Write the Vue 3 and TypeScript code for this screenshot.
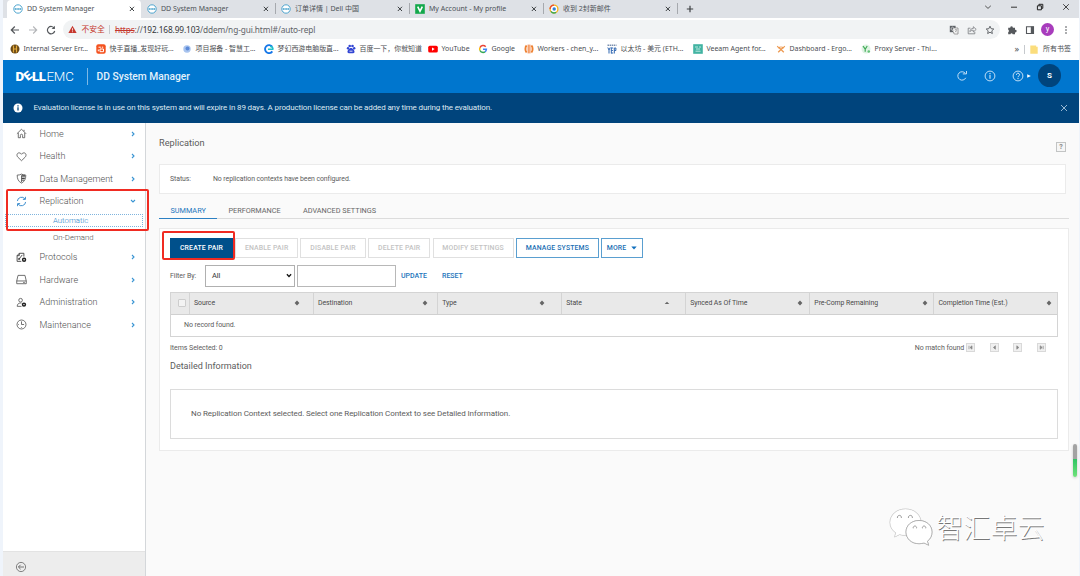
<script setup lang="ts">
interface Tab { title: string; icon: 'dell' | 'v' | 'mail'; active?: boolean }
interface Bookmark { label: string; icon: string; width: number }
interface NavItem { label: string; icon: string; open?: boolean; children?: string[] }

const tabs: Tab[] = [
  { title: 'DD System Manager', icon: 'dell', active: true },
  { title: 'DD System Manager', icon: 'dell' },
  { title: '订单详情 | Dell 中国', icon: 'dell' },
  { title: 'My Account - My profile', icon: 'v' },
  { title: '收到 2封新邮件', icon: 'mail' },
]

const bookmarks: Bookmark[] = [
  { label: 'Internal Server Err...', icon: 'hive', width: 86 },
  { label: '快手直播_发现好玩...', icon: 'ks', width: 86 },
  { label: '项目报备 - 智慧工...', icon: 'globe', width: 82 },
  { label: '梦幻西游电脑版直...', icon: 'cc', width: 82 },
  { label: '百度一下，你就知道', icon: 'paw', width: 82 },
  { label: 'YouTube', icon: 'yt', width: 50 },
  { label: 'Google', icon: 'google', width: 46 },
  { label: 'Workers - chen_y...', icon: 'workers', width: 83 },
  { label: '以太坊 - 美元 (ETH...', icon: 'yep', width: 86 },
  { label: 'Veeam Agent for...', icon: 'veeam', width: 83 },
  { label: 'Dashboard - Ergo...', icon: 'dash', width: 85 },
  { label: 'Proxy Server - Thi...', icon: 'proxy', width: 90 },
]

const nav: NavItem[] = [
  { label: 'Home', icon: 'home' },
  { label: 'Health', icon: 'heart' },
  { label: 'Data Management', icon: 'shield' },
  { label: 'Replication', icon: 'sync', open: true, children: ['Automatic', 'On-Demand'] },
  { label: 'Protocols', icon: 'proto' },
  { label: 'Hardware', icon: 'disk' },
  { label: 'Administration', icon: 'admin' },
  { label: 'Maintenance', icon: 'clock' },
]

const columns = [
  { label: 'Source', sort: 'both', pad: 13 },
  { label: 'Destination', sort: 'both', pad: 9 },
  { label: 'Type', sort: 'both', pad: 16 },
  { label: 'State', sort: 'up', pad: 15 },
  { label: 'Synced As Of Time', sort: 'both', pad: 6 },
  { label: 'Pre-Comp Remaining', sort: 'both', pad: 5 },
  { label: 'Completion Time (Est.)', sort: 'both', pad: 4.5 },
]

const actions = [
  { label: 'CREATE PAIR', kind: 'primary', width: 63 },
  { label: 'ENABLE PAIR', kind: 'off', width: 62.5 },
  { label: 'DISABLE PAIR', kind: 'off', width: 65.5 },
  { label: 'DELETE PAIR', kind: 'off', width: 62 },
  { label: 'MODIFY SETTINGS', kind: 'off', width: 81 },
  { label: 'MANAGE SYSTEMS', kind: 'line', width: 83 },
  { label: 'MORE', kind: 'line', width: 41.5 },
]

const pagers = [
  'M3 2.8v3.4M6 2.8L4 4.5l2 1.7z',
  'M5.4 2.8L3.4 4.5l2 1.7z',
  'M3.8 2.8l2 1.7-2 1.7z',
  'M6.2 2.8v3.4M3.2 2.8l2 1.7-2 1.7z',
]
</script>

<template>
  <div class="window">
    <div class="tabbar">
      <div v-for="(t, i) in tabs" :key="i" class="tab" :class="{ active: t.active, sep: i > 1 }">
        <svg v-if="t.icon === 'dell'" class="fav" viewBox="0 0 10 10"><circle cx="5" cy="5" r="4.2" fill="#fff" stroke="#3c9cc9" stroke-width=".9" /><path d="M1.8 5h6.4" stroke="#3c9cc9" stroke-width="1.7" stroke-dasharray="1.3 .35" /></svg>
        <svg v-else-if="t.icon === 'v'" class="fav" viewBox="0 0 10 10"><rect x=".2" y=".2" width="9.6" height="9.6" fill="#12a84b" /><path d="M2.7 2.6L5 7.3l2.3-4.7" fill="none" stroke="#fff" stroke-width="1.6" /></svg>
        <svg v-else class="fav" viewBox="0 0 10 10"><circle cx="5" cy="5" r="3.9" fill="#fff" stroke="#f5b41e" stroke-width="1.4" /><path d="M1.1 5A3.9 3.9 0 0 1 5 1.1" fill="none" stroke="#ea4a35" stroke-width="1.4" /><path d="M2 7.4A3.9 3.9 0 0 0 7 8.300" fill="none" stroke="#37a853" stroke-width="1.4" /><circle cx="5.2" cy="5" r="1.7" fill="#2f7fd8" /></svg>
        <span class="tab-title">{{ t.title }}</span>
        <svg class="tab-x" viewBox="0 0 6 6"><path d="M.8 .8l4.2 4.2M5 .8L.8 5" stroke="#3c4043" stroke-width="1" /></svg>
      </div>
      <div class="newtab"><svg viewBox="0 0 8 8"><path d="M4 .8v6.4M.8 4h6.4" stroke="#3c4043" stroke-width="1.2" /></svg></div>
      <div class="winctl">
        <svg viewBox="0 0 10 10"><path d="M2.2 3.8L5 6.4l2.8-2.6" fill="none" stroke="#444" stroke-width=".9" /></svg>
        <svg viewBox="0 0 10 10"><path d="M2 5.2h6" stroke="#333" /></svg>
        <svg viewBox="0 0 10 10"><path d="M2.4 3.8h4v4h-4zM3.9 3.6V2.3h3.9v4H6.6" fill="none" stroke="#222" stroke-width="1" /></svg>
        <svg viewBox="0 0 10 10"><path d="M2.2 2.2l5.6 5.6M7.8 2.2L2.2 7.8" stroke="#333" stroke-width=".9" /></svg>
      </div>
    </div>

    <div class="toolbar">
      <svg class="tool t1" viewBox="0 0 10 10"><path d="M9 5H1.4M4.8 1.5L1.3 5l3.5 3.5" fill="none" stroke="#55585c" stroke-width="1.2" /></svg>
      <svg class="tool t2" viewBox="0 0 10 10"><path d="M1 5h7.6M5.2 1.5L8.7 5 5.2 8.500" fill="none" stroke="#b4b6b9" stroke-width="1.1" /></svg>
      <svg class="tool t3" viewBox="0 0 10 10"><path d="M8.300 3.300A3.700 3.700 0 1 0 8.700 6" fill="none" stroke="#55585c" stroke-width="1.200" /><path d="M8.900 .8v3.300H5.600z" fill="#55585c" /></svg>
      <div class="address">
        <svg class="warn" viewBox="0 0 10 10"><path d="M5 .8L9.600 9H.4z" fill="#c5362c" /><path d="M5 3.600v2.600M5 7v1" stroke="#fff" stroke-width=".9" /></svg>
        <span class="unsafe">不安全</span>
        <i class="bar"></i>
        <span class="url"><s>https</s><span class="grey">://</span><b>192.168.99.103</b><span class="grey">/ddem/ng-gui.html#/auto-repl</span></span>
        <span class="addr-icons">
          <svg viewBox="0 0 10 10"><rect x=".8" y=".8" width="5.800" height="6.400" fill="#5f6368" /><path d="M4.500 3h4.500v6H5.200L4.300 7" fill="#fff" stroke="#777" stroke-width=".7" /><path d="M5.600 4.700h2.600M6.900 4v.7M5.800 7.600l2-2.600M6 5.500l2 2" stroke="#777" stroke-width=".5" /><path d="M4.800 3A1.500 1.500 0 1 0 5 4.200H3.700" fill="none" stroke="#fff" stroke-width=".6" /></svg>
          <svg viewBox="0 0 10 10"><path d="M3.500 3.200H1.200v5.600h6.600V6.800M2.800 6.800c.2-2.300 1.600-3.300 3.500-3.300V1.700L9.200 4.400 6.300 7V5.300c-1.500 0-2.600.4-3.500 1.500z" fill="none" stroke="#777a7e" stroke-width=".8" /></svg>
          <svg viewBox="0 0 10 10"><path d="M5 1.200l1.150 2.500 2.650.3-2 1.850.55 2.700L5 7.200 2.650 8.550l.55-2.700-2-1.850 2.650-.3z" fill="none" stroke="#55585c" stroke-width=".9" /></svg>
        </span>
      </div>
      <svg class="tool ext" viewBox="0 0 10 10"><path d="M1.200 2.800h2.100a1.300 1.300 0 1 1 2.500 0h2.200v2.100a1.250 1.250 0 1 1 0 2.400V9.200H5.700a1.200 1.200 0 0 0-2.300 0H1.200V7a1.200 1.200 0 0 0 0-2.200z" fill="#55585c" /></svg>
      <svg class="tool side" viewBox="0 0 10 10"><path d="M1.500 1.700h7v6.800h-7z" fill="none" stroke="#55585c" stroke-width="1.100" /><path d="M5.800 1.500h3v7.200h-3z" fill="#55585c" /></svg>
      <span class="profile">y</span>
      <svg class="tool dots" viewBox="0 0 10 10"><path d="M5 1.300v1.400M5 4.300v1.400M5 7.300v1.400" stroke="#55585c" stroke-width="1.300" /></svg>
    </div>

    <div class="bookmarks">
      <div v-for="b in bookmarks" :key="b.label" class="bm" :style="{ width: b.width + 'px' }">
        <svg class="bmi" viewBox="0 0 10 10">
          <template v-if="b.icon === 'hive'"><circle cx="5" cy="5" r="4.500" fill="#6b4a16" /><path d="M3.500 1.500v7M6.500 1.500v7M3.500 5h3" stroke="#e2a83a" stroke-width="1.200" /></template>
          <template v-else-if="b.icon === 'ks'"><rect x=".3" y=".3" width="9.400" height="9.400" rx="2" fill="#f4511e" /><path d="M2.500 3.200h2.400M5.800 3.200h1.400M4 5h3.500v2.700H4zM2.300 5.500v1.800" fill="none" stroke="#fff" stroke-width="1" /></template>
          <template v-else-if="b.icon === 'globe'"><circle cx="5" cy="5" r="3.700" fill="#a9c4ee" /><circle cx="5.500" cy="4.500" r="2" fill="#5c8ad9" /></template>
          <template v-else-if="b.icon === 'cc'"><path d="M8.300 2.800A4 4 0 1 0 8.300 7.400" fill="none" stroke="#1677e8" stroke-width="1.900" /><path d="M4 5.300h5.500M6 2.500A2.700 2.700 0 0 1 9 5" fill="none" stroke="#1fc0c8" stroke-width="1.500" /></template>
          <template v-else-if="b.icon === 'paw'"><circle cx="2" cy="4.200" r="1.200" fill="#3346d3" /><circle cx="3.700" cy="2" r="1.300" fill="#3346d3" /><circle cx="6.500" cy="2" r="1.300" fill="#3346d3" /><circle cx="8.200" cy="4.300" r="1.200" fill="#3346d3" /><path d="M5 4c1.700 0 3.700 2.300 3.500 4-.2 1.500-2 1.400-3.500 1.200C3.500 9.400 1.700 9.500 1.500 8 1.300 6.300 3.300 4 5 4z" fill="#3346d3" /><path d="M3.500 7.200h3" stroke="#fff" stroke-width=".8" /></template>
          <template v-else-if="b.icon === 'yt'"><rect x=".2" y="1.700" width="9.600" height="6.800" rx="1.600" fill="#f00" /><path d="M4 3.500v3.200L6.700 5.100z" fill="#fff" /></template>
          <template v-else-if="b.icon === 'google'"><g fill="none" stroke-width="1.500"><path d="M7.700 2.700A3.400 3.400 0 0 0 2 3.600" stroke="#ea4335" /><path d="M2 3.600a3.400 3.400 0 0 0 0 2.900" stroke="#fbbc05" /><path d="M2 6.500a3.400 3.400 0 0 0 5 1.300" stroke="#34a853" /><path d="M7 7.800A3.400 3.400 0 0 0 8.400 5.200H5" stroke="#4285f4" /></g></template>
          <template v-else-if="b.icon === 'workers'"><path d="M2.600 1.500C1 3 1 7 2.600 8.500M7.400 1.500C9 3 9 7 7.400 8.500" fill="none" stroke="#ee8131" stroke-width="1.900" /><path d="M4.200 .6v8.800M5.900 .6v8.800" stroke="#f0742a" stroke-width="1" /></template>
          <template v-else-if="b.icon === 'yep'"><path d="M.5 1.300h9" stroke="#7a8fae" stroke-width="1.600" stroke-dasharray="1.500 .6" /><path d="M.8 3.500L2 6l1.200-2.500M2 6v3.500M4.300 3.500v6M4.300 4h1.900M4.300 6.500h1.600M4.300 9h1.900M7.300 9.500V4h1.600v2.500H7.300" fill="none" stroke="#2f66b1" stroke-width="1" /></template>
          <template v-else-if="b.icon === 'veeam'"><rect x=".2" y=".2" width="9.600" height="9.600" fill="#42b3a2" /><path d="M2 3h3M6 3h2M3 5h4M2.500 7.200h5" stroke="#c9efe8" stroke-width=".9" /></template>
          <template v-else-if="b.icon === 'dash'"><path d="M2.200 8.300L6.800 3.700M7.800 8.300L3.200 3.700" fill="none" stroke="#ee9a52" stroke-width="1.300" /><path d="M1.200 2.200l1.900 1.900 1.400-1.400M8.800 2.200L6.900 4.100 5.500 2.700" fill="none" stroke="#ee9a52" stroke-width="1.200" /></template>
          <template v-else><circle cx="5" cy="5" r="4.500" fill="#dff3e3" /><path d="M2 2l2.200 3.200L6.200 2M4.200 5.200v2.500" fill="none" stroke="#3fab56" stroke-width="1.200" /><circle cx="7.800" cy="7.500" r="1.300" fill="#65c178" /></template>
        </svg>
        <span class="bmt">{{ b.label }}</span>
      </div>
      <span class="more-bm">»</span>
      <i class="bar"></i>
      <svg class="folder" viewBox="0 0 8 9"><path d="M.3 .5h5.900v1.200h1.500v7H.3z" fill="#fbdd7c" /></svg>
      <span class="bmt">所有书签</span>
    </div>

    <header class="app-header">
      <div class="logo"><span class="l-d">D</span><span class="l-e">E</span><span class="l-l">LL</span><span class="l-emc">EMC</span></div>
      <div class="product">DD System Manager</div>
      <div class="head-icons">
        <svg viewBox="0 0 12 12"><path d="M9.300 3.300A4.200 4.200 0 1 0 9.800 7.800M6.800 3.900h3.700V1" fill="none" stroke="#d5e9f9" stroke-width=".9" /></svg>
        <svg viewBox="0 0 12 12"><circle cx="6" cy="6" r="4.900" fill="none" stroke="#d5e9f9" stroke-width=".9" /><path d="M6 5v3.800M6 3.100v1.100" stroke="#d5e9f9" stroke-width="1.100" /></svg>
        <svg viewBox="0 0 12 12"><circle cx="6" cy="6" r="4.900" fill="none" stroke="#d5e9f9" stroke-width=".9" /><path d="M4.400 4.800c0-2.200 3.300-2.100 3.200 0C7.500 5.900 6 5.900 6 7.200M6 8v1.100" fill="none" stroke="#d5e9f9" stroke-width="1" /></svg>
        <svg class="caret" viewBox="0 0 4 4"><path d="M.2 .2v3.600L3.900 2z" fill="#fff" /></svg>
        <span class="avatar">S</span>
      </div>
    </header>

    <div class="banner">
      <svg class="info" viewBox="0 0 10 10"><circle cx="5" cy="5" r="4.500" fill="#fff" /><path d="M5 4.300v3.300M5 2.300v1.200" stroke="#00447c" stroke-width="1.300" /></svg>
      <span>Evaluation license is in use on this system and will expire in 89 days. A production license can be added any time during the evaluation.</span>
      <svg class="close" viewBox="0 0 8 8"><path d="M1 1l6 6M7 1L1 7" stroke="#a9c5dc" stroke-width=".9" /></svg>
    </div>

    <div class="body">
      <nav class="side-nav">
        <template v-for="n in nav" :key="n.label">
          <div class="nav-row">
            <svg class="ni" viewBox="0 0 12 12" fill="none" stroke="#555" stroke-width=".9">
              <path v-if="n.icon === 'home'" d="M1 6.300L6 1.300l5 5M2.500 5.300v5.300h2.300V8a1.200 1.200 0 0 1 2.400 0v2.600h2.300V5.300M8.800 3.700V2" />
              <path v-else-if="n.icon === 'heart'" d="M6 10.600L2 6.700C.2 4.700 1.200 2 3.400 2 4.600 2 5.500 2.700 6 3.600 6.500 2.700 7.400 2 8.600 2c2.200 0 3.200 2.700 1.400 4.700z" />
              <template v-else-if="n.icon === 'shield'"><path d="M1.300 2.300C3 2.300 4.500 2 6 1.200c1.500.8 3 1.100 4.700 1.100 0 4-1.200 7-4.700 8.700C2.500 9.300 1.300 6.300 1.300 2.300z" /><path d="M6 4.200h4M6 6h3.600M6 7.800h2.700M6.300 2.500h3.500" stroke="#333" stroke-width="1" /><path d="M6 2.500v7.500" /></template>
              <path v-else-if="n.icon === 'sync'" d="M1.500 5.500A4.600 4.600 0 0 1 9.700 3.100M10.500 6.500a4.600 4.600 0 0 1-8.200 2.400M10.300 .9v2.800H7.500M1.700 11.100V8.300h2.800" stroke="#2f86cb" stroke-width="1" />
              <template v-else-if="n.icon === 'proto'"><path d="M5.800 10.200H1.200V4L3.600 1.400h5V5M1.200 4h2.400V1.400M6.800 3.200L3.500 7.500" stroke="#333" /><circle cx="3.400" cy="7.600" r=".8" stroke="#333" /><circle cx="8.800" cy="8.500" r="1.600" stroke="#222" stroke-width="1.600" /></template>
              <path v-else-if="n.icon === 'disk'" d="M.8 7.600L2.200 1.500h7.600l1.400 6.100v3H.8zM.8 7.600h10.400M7.800 9.200h1.800" />
              <template v-else-if="n.icon === 'admin'"><circle cx="5" cy="3.500" r="2" /><path d="M6 10.200H1.300C1.300 7.600 3 6.600 5 6.600h1" /><circle cx="8.700" cy="8.300" r="1.600" stroke="#222" stroke-width="1.600" /></template>
              <template v-else><circle cx="6" cy="6" r="4.900" /><path d="M6 2.600V6h2.800M2.200 6h.8M6 9v.8" /></template>
            </svg>
            <span class="nl">{{ n.label }}</span>
            <svg class="chev" viewBox="0 0 6 6"><path :d="n.open ? 'M1 2l2 2 2-2' : 'M2 1l2 2-2 2'" fill="none" stroke="#3a95d3" stroke-width="1.100" /></svg>
          </div>
          <div v-if="n.children" class="sub">
            <div v-for="(c, i) in n.children" :key="c" class="sub-item" :class="{ sel: i === 0 }">{{ c }}</div>
          </div>
        </template>
        <div class="nav-foot">
          <svg viewBox="0 0 12 12"><circle cx="6" cy="6" r="4.600" fill="none" stroke="#666" stroke-width=".8" /><path d="M9 6H3.500M5.600 3.800L3.400 6l2.200 2.200" fill="none" stroke="#666" stroke-width=".9" /></svg>
        </div>
      </nav>

      <main class="main">
        <div class="title-row"><h1>Replication</h1><span class="help">?</span></div>
        <section class="status"><span class="st-label">Status:</span><span>No replication contexts have been configured.</span></section>
        <div class="subtabs">
          <span class="stab on">SUMMARY</span><span class="stab perf">PERFORMANCE</span><span class="stab adv">ADVANCED SETTINGS</span>
        </div>
        <section class="panel">
          <div class="actions">
            <button v-for="a in actions" :key="a.label" class="btn" :class="a.kind" :style="{ width: a.width + 'px' }">
              {{ a.label }}<svg v-if="a.label === 'MORE'" viewBox="0 0 6 4"><path d="M.3 .5h5.400L3 3.600z" fill="#0f6fbd" /></svg>
            </button>
          </div>
          <div class="filter">
            <span class="fl">Filter By:</span>
            <span class="select">All<svg viewBox="0 0 6 5"><path d="M.9 1.300L3 3.500l2.100-2.200" fill="none" stroke="#111" stroke-width="1.300" /></svg></span>
            <span class="input"></span>
            <a class="up">UPDATE</a><a>RESET</a>
          </div>
          <div class="grid">
            <div class="thead">
              <div class="th chk"><i></i></div>
              <div v-for="c in columns" :key="c.label" class="th" :style="{ paddingRight: c.pad + 'px' }">
                <span>{{ c.label }}</span>
                <svg viewBox="0 0 6 6"><path :d="c.sort === 'both' ? 'M3 .4L5.400 3 3 5.600.6 3z' : 'M3 1.700L5.300 4H.7z'" fill="#666" /></svg>
              </div>
            </div>
            <div class="empty">No record found.</div>
          </div>
          <div class="foot">
            <span>Items Selected: 0</span>
            <span class="nomatch">No match found</span>
            <svg v-for="p in pagers" :key="p" class="pg" viewBox="0 0 9 9"><rect x=".5" y=".5" width="8" height="8" fill="#f0f0f0" stroke="#d9d9d9" /><path :d="p" fill="#888" stroke="#888" stroke-width=".7" /></svg>
          </div>
          <h2>Detailed Information</h2>
          <div class="detail">No Replication Context selected. Select one Replication Context to see Detailed Information.</div>
        </section>
      </main>
    </div>

    <div class="mark mark-nav"></div>
    <div class="mark mark-create"></div>
    <div class="meter"></div>
    <div class="watermark">
      <svg viewBox="0 0 46 40">
        <g fill="#fff" stroke-linejoin="round">
          <path class="bubble" d="M17.500 2C8.500 2 2 8 2 15.500c0 4.500 2.300 8 5.800 10.300L6.600 30l5-2.500c2 .6 4 .9 6 .9C26.500 28.400 33 23 33 15.500S26.500 2 17.500 2z" stroke="#d8d8d8" stroke-width=".4" />
          <path class="bubble" d="M31 13.500c-7.500 0-13 5-13 11.500s5.500 11.700 13 11.700c1.800 0 3.500-.3 5-.8l4.600 2.300-1.200-4c3-2.200 4.600-5.400 4.600-9.200 0-6.500-5.500-11.500-13-11.500z" stroke="#a5a5a5" stroke-width=".6" />
        </g>
        <g fill="none" stroke="#999" stroke-width="1"><path d="M9.500 11a2 2 0 1 1 3.800 0M20.500 11a2 2 0 1 1 3.800 0M25.300 21.300a1.700 1.700 0 1 1 3.200 0M34.500 21.300a1.700 1.700 0 1 1 3.200 0" /></g>
      </svg>
      <span>智汇卓云</span>
    </div>
  </div>
</template>

<style>
html, body { margin: 0; overflow: hidden; }
</style>

<style scoped>
* { box-sizing: border-box; }
svg { display: block; flex: none; }
.window { position: relative; width: 1080px; height: 576px; padding: 0 1.500px 0 2.500px; background: #eff4fb; overflow: hidden; display: flex; flex-direction: column; font-family: Roboto, "Noto Sans CJK SC", sans-serif; color: #5c5c5c; white-space: nowrap; }

.tabbar { height: 17.500px; flex: none; background: #dee1e6; display: flex; padding-left: 4.500px; font: 7px/17px "Noto Sans", "Noto Sans CJK SC", sans-serif; color: #4d5156; }
.tab { position: relative; width: 134px; display: flex; align-items: center; padding-left: 6px; }
.tab.active { background: #fff; border-radius: 4px 4px 0 0; }
.tab.sep { border-left: 1px solid #a6a9ae; height: 11px; margin-top: 3px; padding-left: 5px; line-height: 11px; }
.fav { width: 10px; height: 10px; }
.tab-title { margin-left: 4px; flex: 1; }
.tab-x { width: 6px; height: 6px; margin-right: 6px; }
.newtab { border-left: 1px solid #a6a9ae; height: 11px; margin-top: 3px; padding: 1.500px 0 0 8px; }
.newtab svg { width: 8px; height: 8px; }
.winctl { margin-left: auto; display: flex; gap: 15.800px; padding: 2px 8px 0 0; }
.winctl svg { width: 10px; height: 10px; }

.toolbar { height: 23.500px; flex: none; background: #fff; display: flex; align-items: center; padding-left: 7.500px; padding-top: 1px; }
.tool { width: 10px; height: 10px; }
.t2 { margin-left: 8px; }
.t3 { margin-left: 8px; }
.address { margin-left: 7px; width: 937px; height: 19px; border-radius: 10px; background: #f1f3f4; display: flex; align-items: center; padding-left: 5px; font: 8.300px/19px "Noto Sans", "Noto Sans CJK SC", sans-serif; }
.warn { width: 9px; height: 9px; }
.unsafe { color: #c5362c; margin-left: 4.500px; font-size: 7.800px; }
.bar { width: 1px; height: 9px; background: #c6c9cd; margin: 0 4.500px; }
.url { color: #5f6368; letter-spacing: -.11px; }
.url b { font-weight: 400; color: #333639; }
.url s { color: #c5362c; }
.addr-icons { margin-left: auto; display: flex; gap: 8px; padding-right: 5px; }
.addr-icons svg { width: 10px; height: 10px; }
.ext { margin-left: 7px; }
.side { margin-left: 8px; }
.profile { margin-left: 6px; width: 13px; height: 13px; border-radius: 50%; background: #a83cbc; color: #fff; font: 7.500px/12px Roboto, sans-serif; text-align: center; }
.dots { margin-left: 7px; }

.bookmarks { height: 18.500px; flex: none; background: #fff; display: flex; align-items: center; padding-left: 7px; padding-bottom: 2px; font: 6.950px/14px "Noto Sans", "Noto Sans CJK SC", sans-serif; color: #4a4d51; }
.bm { display: flex; align-items: center; flex: none; }
.bmi { width: 10px; height: 10px; margin-right: 4px; }
.more-bm { margin-left: 64px; font-size: 9px; }
.bookmarks .bar { margin: 0 5px 0 5px; }
.folder { width: 8px; height: 9px; margin-right: 5px; }

.app-header { height: 33.500px; flex: none; background: #0076ce; display: flex; align-items: center; padding-left: 13px; color: #fff; }
.logo { display: flex; align-items: center; width: 72px; height: 17px; border-right: 1px solid #7db9e6; font-size: 13px; line-height: 17px; }
.l-d { font-weight: 900; font-size: 13.300px; }
.l-e { font-weight: 900; font-size: 12px; transform: rotate(-38deg); margin: 0 .5px 0 1px; }
.l-l { font-weight: 900; font-size: 13.300px; margin-left: -.3px; letter-spacing: -.5px; }
.l-emc { font-weight: 300; font-size: 13.300px; margin-left: 1px; letter-spacing: -.15px; }
.product { margin-left: 9px; font-size: 10.250px; font-weight: 500; color: #e3f1fb; }
.head-icons { margin-left: auto; display: flex; align-items: center; padding-right: 17.500px; }
.head-icons svg { width: 12px; height: 12px; margin-right: 16px; }
.head-icons svg:nth-child(3) { margin-right: 3px; }
.head-icons .caret { width: 4px; height: 4px; margin-right: 7.500px; }
.avatar { width: 23px; height: 23px; border-radius: 50%; background: #00447c; font: 700 8px/23px Roboto, sans-serif; text-align: center; margin-top: -1px; }

.banner { height: 29.500px; flex: none; background: #00447c; display: flex; align-items: center; padding-left: 10.500px; color: #dfe9f1; font-size: 8px; letter-spacing: -.135px; }
.info { width: 10px; height: 10px; margin-right: 10.500px; }
.close { width: 8px; height: 8px; margin-left: auto; margin-right: 10.500px; }

.body { flex: 1; display: flex; min-height: 0; }
.side-nav { width: 143px; background: #fff; border-right: 1px solid #d4d7da; display: flex; flex-direction: column; font-weight: 300; color: #505050; }
.nav-row { height: 22.400px; flex: none; display: flex; align-items: center; padding-left: 13px; font-size: 9.050px; }
.ni { width: 11px; height: 11px; }
.nl { margin-left: 13px; flex: 1; }
.chev { width: 6px; height: 6px; margin-right: 9px; }
.sub { height: 33.800px; flex: none; font-size: 7.800px; padding: 1.500px 2px 0 2px; }
.sub-item { height: 13px; line-height: 12px; border: 1px dotted transparent; padding-left: 47.500px; margin-bottom: 4px; }
.sub-item.sel { border-color: #7fb4dd; color: #2f86cb; line-height: 11px; }
.nav-foot { margin-top: auto; height: 25px; background: #ededed; border-top: 1px solid #e3e3e3; padding: 9px 0 0 12px; }
.nav-foot svg { width: 12px; height: 12px; }

.main { flex: 1; background: #fafafa; padding-left: 13.500px; font-size: 7px; letter-spacing: -.06px; }
.title-row { display: flex; height: 41.500px; }
h1 { margin: 13px 0 0; font-size: 9.200px; line-height: 14px; font-weight: 400; letter-spacing: 0; }
.help { margin: 19px 12.500px 0 auto; width: 10px; height: 10px; border: 1px solid #c2c4c4; background: #f6f6f6; font: 700 7px/8px Roboto, sans-serif; color: #888; text-align: center; }
.status { width: 906.500px; height: 30px; border: 1px solid #ebebeb; background: #fff; display: flex; align-items: center; padding-left: 10px; font-size: 6.900px; }
.st-label { width: 43px; }
.subtabs { height: 25px; width: 909.500px; border-bottom: 1px solid #dcdcdc; display: flex; font-size: 7.300px; line-height: 34px; color: #666; letter-spacing: 0; }
.stab { height: 25px; }
.stab.on { width: 57.500px; padding-left: 11.500px; border-bottom: 1.500px solid #2c80c3; color: #1b75bc; }
.perf { margin-left: 12px; width: 74.500px; }
.panel { margin-top: 8.500px; width: 909.500px; height: 223px; border: 1px solid #ebebeb; background: #fff; padding: 9px 0 0 10px; }
.actions { display: flex; gap: 2.400px; height: 20px; }
.btn { height: 20px; padding: 0; flex: none; background: #fff; border: 1px solid #e0e0e0; font: 500 6.900px/18px Roboto, sans-serif; letter-spacing: .15px; color: #c3c3c3; display: flex; align-items: center; justify-content: center; }
.btn.primary { background: #00508b; border-color: #00508b; color: #fff; }
.btn.line { border-color: #5a9fd0; color: #1b6fb4; }
.btn svg { width: 6px; height: 4px; margin-left: 5px; }
.filter { display: flex; align-items: center; height: 22px; margin-top: 7px; }
.fl { width: 35px; }
.select { width: 90px; height: 21.500px; border: 1px solid #b0b0b0; display: flex; align-items: center; justify-content: space-between; padding: 0 2px 0 6px; font-size: 7.500px; color: #333; }
.select svg { width: 6px; height: 5px; }
.input { margin-left: 2px; width: 99px; height: 21.500px; border: 1px solid #b8b8b8; }
.filter a { color: #1b75bc; font-weight: 500; font-size: 7px; margin-left: 5px; width: 36px; letter-spacing: 0; }
.grid { margin-top: 5px; width: 888px; border: 1px solid #d4d4d4; height: 45.500px; }
.thead { display: grid; grid-template-columns: 17.500px repeat(7, minmax(0, 1fr)); height: 22px; background: #e9e9e9; border-bottom: 1px solid #d0d0d0; }
.th { border-left: 1px solid #d4d4d4; display: flex; align-items: center; justify-content: space-between; padding-left: 4.500px; font-size: 6.900px; color: #4a4a4a; }
.th svg { width: 6px; height: 6px; }
.th.chk { border-left: 0; padding: 0 0 0 6.500px; }
.chk i { width: 8px; height: 8px; border: 1px solid #cdcdcd; background: #f3f3f3; border-radius: 1px; }
.empty { padding-left: 13px; line-height: 21px; }
.foot { display: flex; align-items: center; height: 12px; margin-top: 4.500px; width: 888px; }
.nomatch { margin-left: auto; margin-right: 2px; }
.pg { width: 9px; height: 9px; margin-right: 14.600px; }
.pg:last-child { margin-right: 12px; }
h2 { font-weight: 400; font-size: 9px; line-height: 12px; margin: 6.500px 0 0; letter-spacing: 0; }
.detail { margin-top: 17px; width: 888px; height: 50px; border: 1px solid #dcdcdc; padding-left: 20px; font-size: 8px; line-height: 47px; letter-spacing: -.08px; }

.mark { position: absolute; border: 2px solid #f02b22; border-radius: 2px; }
.mark-nav { left: 6px; top: 189px; width: 143px; height: 42px; }
.mark-create { left: 162px; top: 231px; width: 73px; height: 29px; }
.meter { position: absolute; left: 1073px; top: 444px; width: 4px; height: 33px; border-radius: 2px; background: linear-gradient(#a3a3a3 0 15px, #2fc464 15px, #6fe27a); box-shadow: 0 1px 3px rgba(0, 0, 0, .2); }
.body { margin-top: .3px; }
.watermark { position: absolute; left: 888px; top: 507px; display: flex; }
.watermark svg { width: 46px; height: 40px; overflow: visible; }
.bubble { filter: drop-shadow(.5px .9px .5px #888); }
.watermark span { margin-left: 2.500px; font: 27px/40px "Noto Sans CJK SC", sans-serif; font-weight: 300; color: #fff; text-shadow: .8px .8px .5px #777; }
</style>
